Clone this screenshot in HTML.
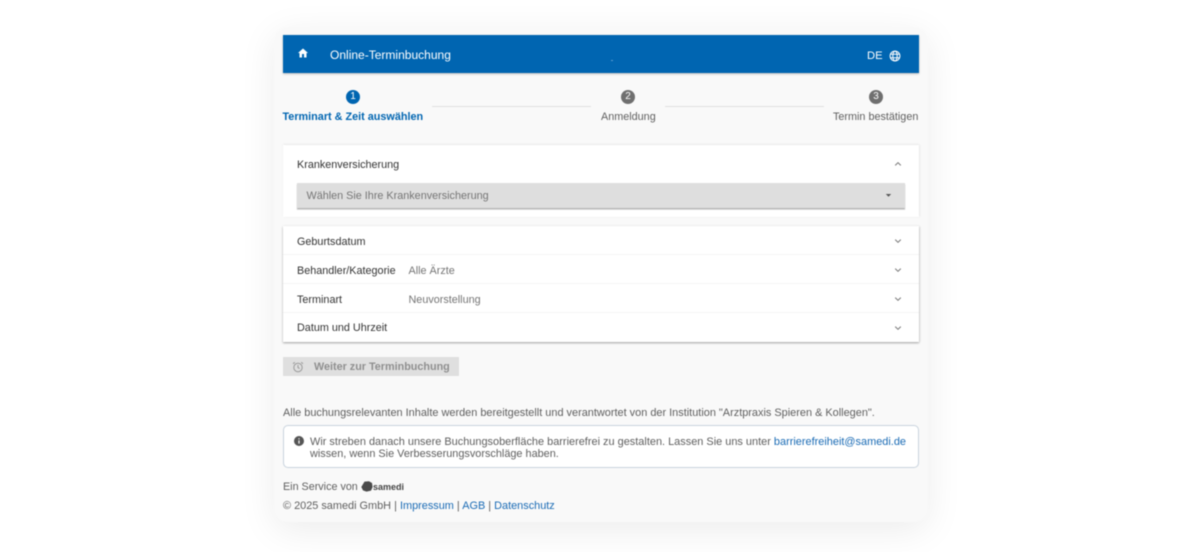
<!DOCTYPE html>
<html lang="de"><head><meta charset="utf-8"><title>Online-Terminbuchung</title>
<style>
*{box-sizing:border-box}
html,body{margin:0;padding:0;width:1200px;height:552px;overflow:hidden;background:#fff}
body{font-family:"Liberation Sans",Arial,sans-serif;color:#5f5f5f;font-size:10.92px}
.a{position:absolute;white-space:nowrap}
#wrap{position:absolute;left:0;top:0;width:1200px;height:552px;filter:blur(.4px)}
#card{position:absolute;left:274px;top:27px;width:654px;height:495px;background:#f9f9f9;border-radius:14px;box-shadow:0 8px 36px rgba(0,0,0,.08)}
.t{line-height:16px;height:16px}
.s{font-size:10.82px}
.bar{background:#e0e0e0;height:1.4px;top:106px}
.circ{width:14px;height:14px;border-radius:50%;top:90px;background:#6f6f6f;color:#fff;font-size:10px;line-height:14px;text-align:center}
.panel{background:#fff;left:283px;width:636px}
.sep{left:283px;width:636px;height:1px;background:#f5f5f5}
a{color:#1a6bb5;text-decoration:none}
svg{position:absolute;display:block}
</style></head><body>
<div id="wrap">
<div id="card"></div>
<div class="a" style="left:282.5px;top:35px;width:636.5px;height:38px;background:#0065b1;box-shadow:0 1px 2px rgba(0,0,0,.25)"></div>
<svg style="left:297px;top:47px" width="12" height="12" viewBox="0 0 24 24"><path fill="#fff" d="M10 21v-7h4v7h5v-9h3L12 3 2 12h3v9z"/></svg>
<div class="a t" style="left:330px;top:47px;color:#fff;font-size:12.03px">Online-Terminbuchung</div>
<div class="a" style="left:611px;top:60px;width:2px;height:1px;background:#5a9bd0"></div>
<div class="a t" style="left:867px;top:48px;color:#fff;font-size:11.2px">DE</div>
<svg style="left:889px;top:50px" width="12" height="12" viewBox="0 0 12 12" fill="none" stroke="#fff" stroke-width="1"><circle cx="6" cy="6" r="4.9"/><ellipse cx="6" cy="6" rx="2.2" ry="4.9"/><path d="M1.2 4.2h9.6M1.2 7.8h9.6"/></svg>

<div class="a circ" style="left:346px;background:#0065b1">1</div>
<div class="a circ" style="left:621px">2</div>
<div class="a circ" style="left:869px">3</div>
<div class="a bar" style="left:432px;width:159px"></div>
<div class="a bar" style="left:665px;width:159px"></div>
<div class="a t" style="left:282.5px;top:109px;color:#0065b1;font-weight:bold;font-size:10.83px">Terminart &amp; Zeit auswählen</div>
<div class="a t s" style="left:601px;top:109px">Anmeldung</div>
<div class="a t s" style="left:833px;top:109px">Termin bestätigen</div>

<div class="a panel" style="top:145px;height:72px;box-shadow:0 -1px 2px rgba(0,0,0,.05),1px 0 2px rgba(0,0,0,.06)"></div>
<div class="a t s" style="left:297px;top:157px;color:#333">Krankenversicherung</div>
<svg style="left:893px;top:159px" width="10" height="10" viewBox="0 0 10 10" fill="none" stroke="#777" stroke-width="1"><path d="M2.2 6.4 5 3.7l2.8 2.7"/></svg>
<div class="a" style="left:297px;top:183px;width:608px;height:25px;background:#dedede;box-shadow:0 1.5px 1px rgba(0,0,0,.3)"></div>
<div class="a t s" style="left:306.5px;top:188px;color:#757575">Wählen Sie Ihre Krankenversicherung</div>
<svg style="left:885px;top:193px" width="7" height="5" viewBox="0 0 7 5"><path fill="#555" d="M.8 1h5.4L3.5 3.8z"/></svg>

<div class="a panel" style="top:226px;height:116px;box-shadow:0 1px 2px rgba(0,0,0,.35),1px 0 2px rgba(0,0,0,.06)"></div>
<div class="a sep" style="top:254px"></div>
<div class="a sep" style="top:283px"></div>
<div class="a sep" style="top:312px"></div>
<div class="a t s" style="left:297px;top:234px;color:#333">Geburtsdatum</div>
<div class="a t s" style="left:297px;top:263px;color:#333">Behandler/Kategorie</div>
<div class="a t s" style="left:297px;top:292px;color:#333">Terminart</div>
<div class="a t s" style="left:297px;top:320px;color:#333">Datum und Uhrzeit</div>
<div class="a t s" style="left:408.5px;top:263px;color:#757575">Alle Ärzte</div>
<div class="a t s" style="left:408.5px;top:292px;color:#757575">Neuvorstellung</div>
<svg style="left:893px;top:236px" width="10" height="10" viewBox="0 0 10 10" fill="none" stroke="#777" stroke-width="1"><path d="M2.2 3.6 5 6.3l2.8-2.7"/></svg>
<svg style="left:893px;top:265px" width="10" height="10" viewBox="0 0 10 10" fill="none" stroke="#777" stroke-width="1"><path d="M2.2 3.6 5 6.3l2.8-2.7"/></svg>
<svg style="left:893px;top:294px" width="10" height="10" viewBox="0 0 10 10" fill="none" stroke="#777" stroke-width="1"><path d="M2.2 3.6 5 6.3l2.8-2.7"/></svg>
<svg style="left:893px;top:323px" width="10" height="10" viewBox="0 0 10 10" fill="none" stroke="#777" stroke-width="1"><path d="M2.2 3.6 5 6.3l2.8-2.7"/></svg>

<div class="a" style="left:283px;top:357px;width:176px;height:19px;background:#dfdfdf"></div>
<svg style="left:292px;top:360.5px" width="12" height="12" viewBox="0 0 12 12" fill="none" stroke="#9a9a9a" stroke-width="1"><circle cx="6" cy="6.5" r="4.2"/><path d="M6 4v2.6l1.6 1M1 2.8 2.8 1.2M11 2.8 9.2 1.2"/></svg>
<div class="a t" style="left:314px;top:359px;color:#8f8f8f;font-weight:bold;font-size:10.8px">Weiter zur Terminbuchung</div>

<div class="a t" style="left:283px;top:405px;font-size:10.93px">Alle buchungsrelevanten Inhalte werden bereitgestellt und verantwortet von der Institution "Arztpraxis Spieren &amp; Kollegen".</div>
<div class="a" style="left:283px;top:425px;width:636px;height:43px;background:#fff;border:1.6px solid #c9d3de;border-radius:5px"></div>
<svg style="left:294px;top:436px" width="10" height="10" viewBox="0 0 10 10"><circle cx="5" cy="5" r="5" fill="#555"/><path stroke="#fff" stroke-width="1.2" d="M5 4.4v3.2M5 2.2v1.2"/></svg>
<div class="a t" style="left:310px;top:434px;font-size:10.94px">Wir streben danach unsere Buchungsoberfläche barrierefrei zu gestalten. Lassen Sie uns unter <a href="#">barrierefreiheit@samedi.de</a></div>
<div class="a t" style="left:310px;top:446px;font-size:10.9px">wissen, wenn Sie Verbesserungsvorschläge haben.</div>

<div class="a t" style="left:283px;top:479px;font-size:10.78px">Ein Service von</div>
<svg style="left:361px;top:481px" width="12" height="11" viewBox="0 0 12 11"><path fill="#4a4a4a" d="M3.5.6 8 .2l3 1.8.6 4-1.6 3.6-4.5 1L2 9.4.3 6z"/></svg>
<div class="a t" style="left:373px;top:478.5px;color:#444;font-weight:bold;font-size:9px">samedi</div>
<div class="a t" style="left:283px;top:498px">© 2025 samedi GmbH | <a href="#">Impressum</a> | <a href="#">AGB</a> | <a href="#">Datenschutz</a></div>
</div>
</body></html>
